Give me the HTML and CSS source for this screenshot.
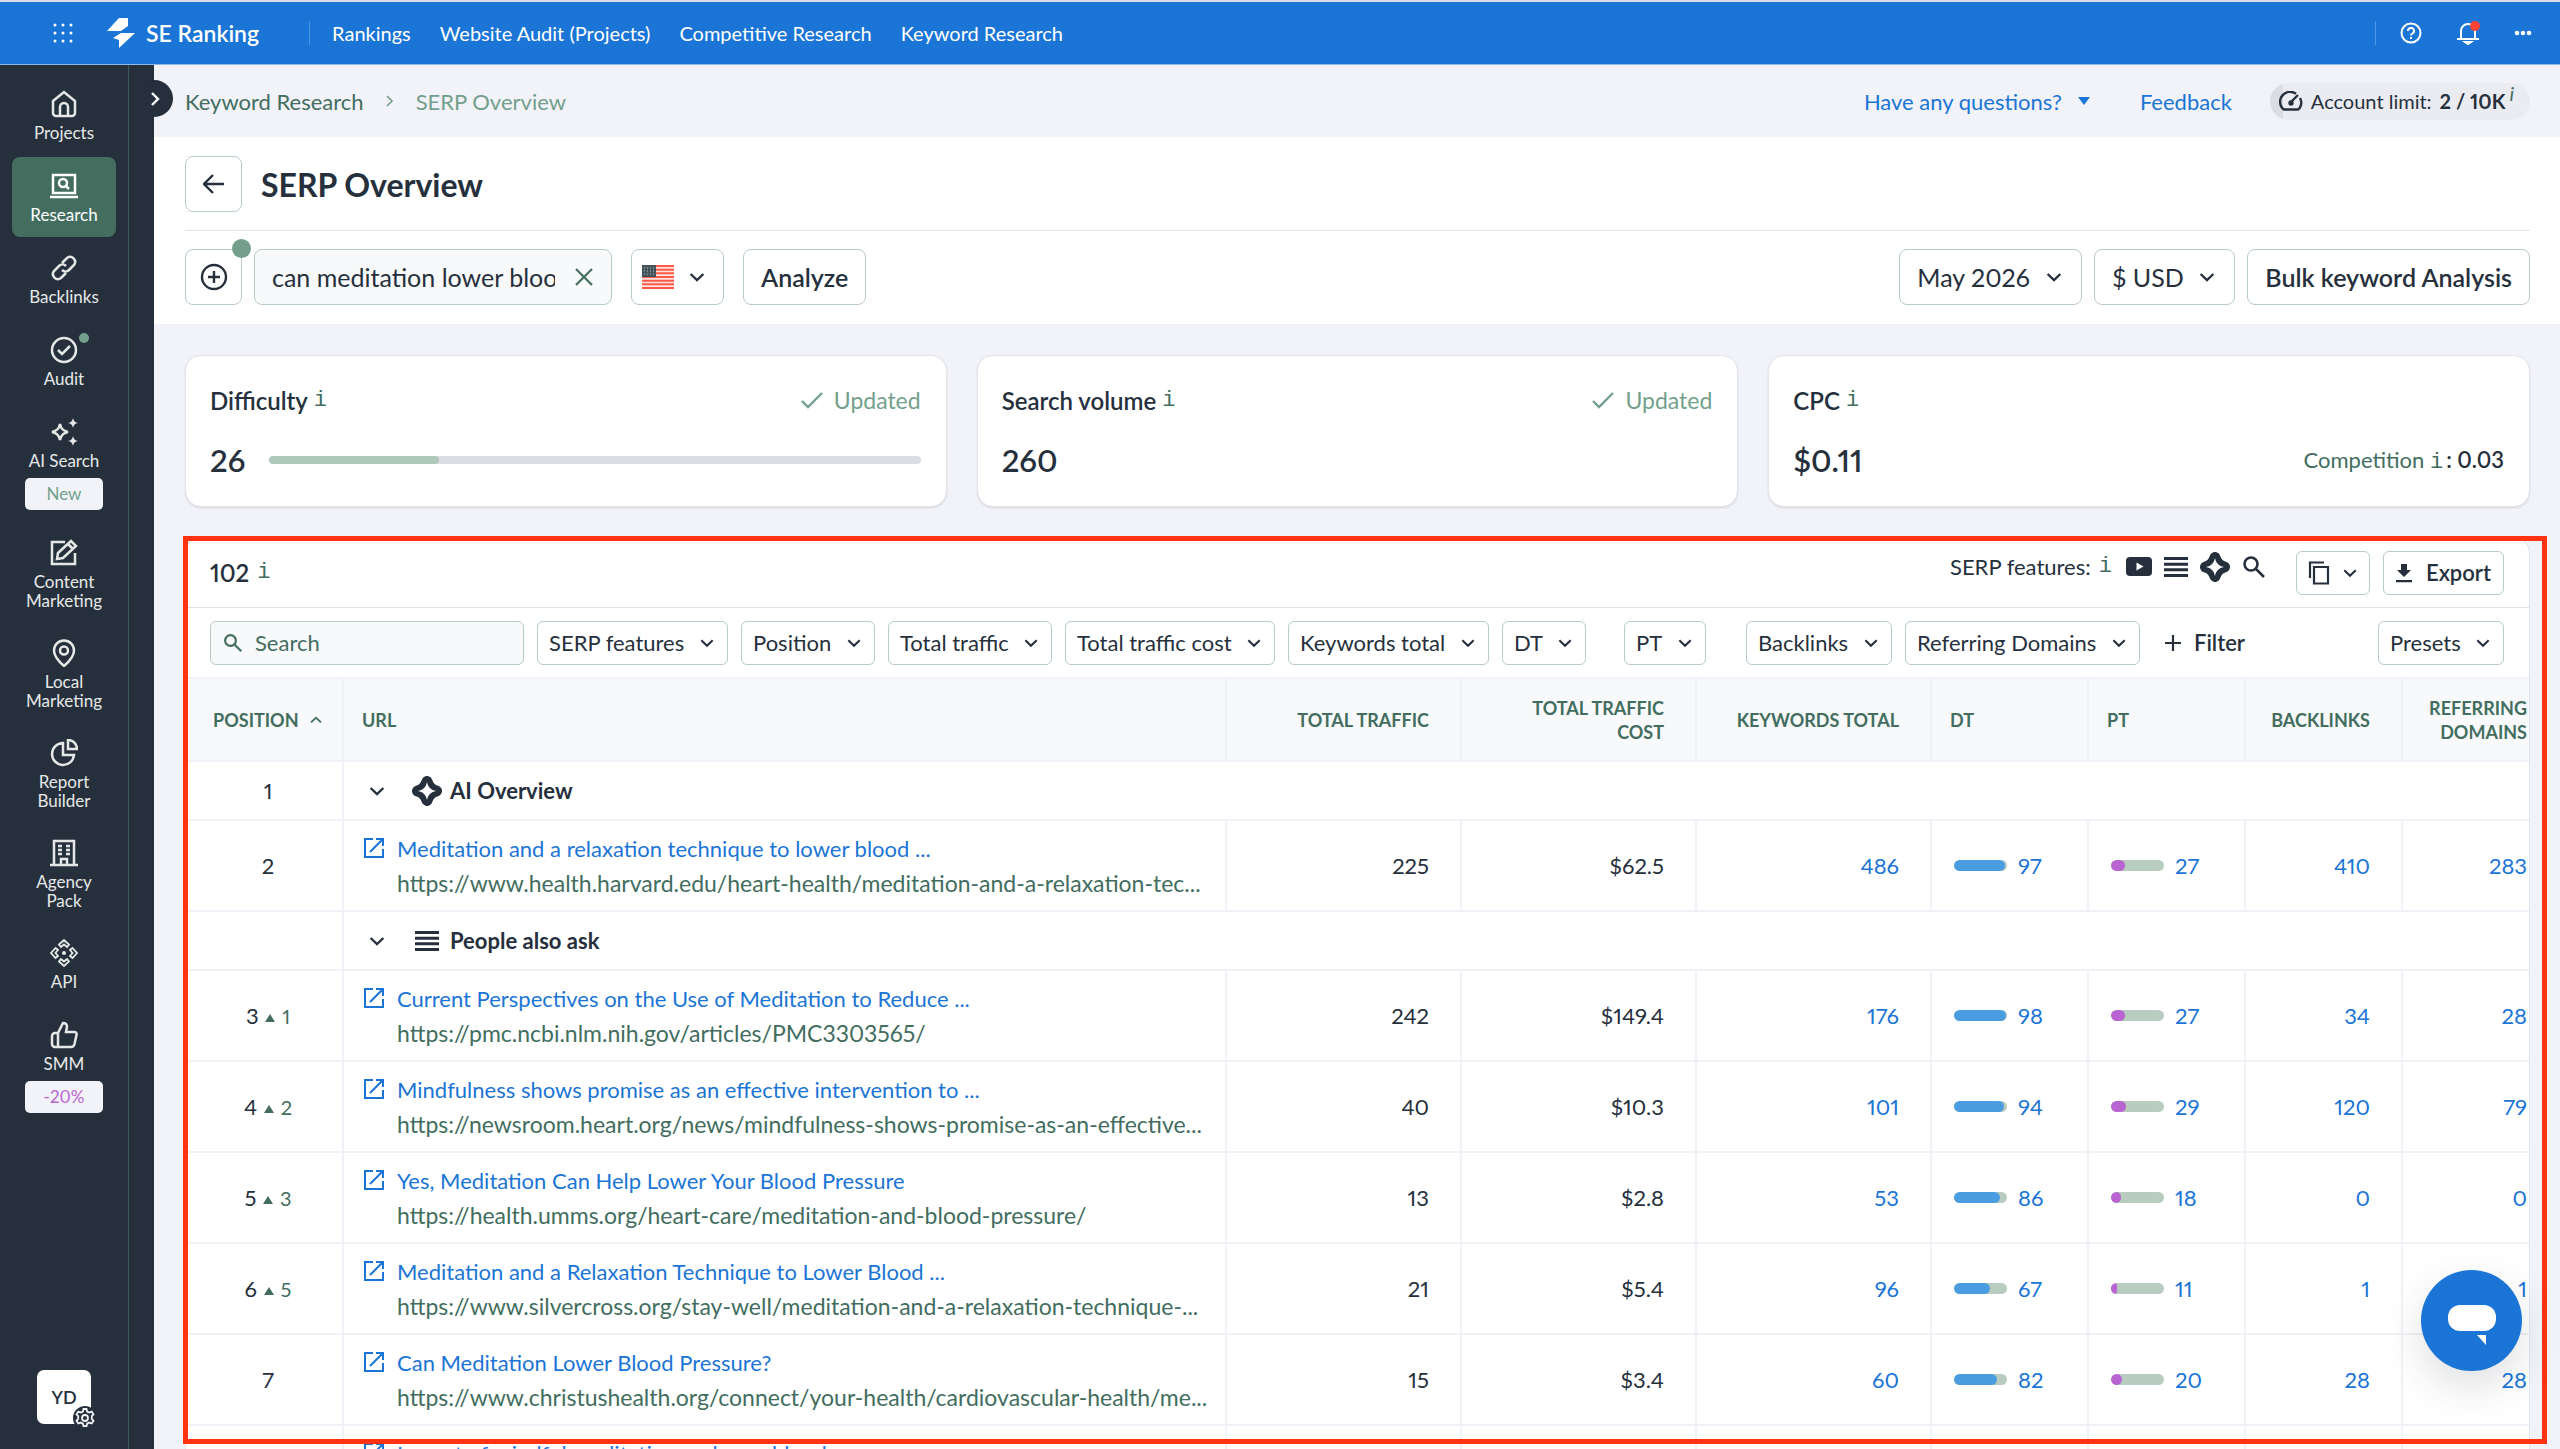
FILE: index.html
```html
<!DOCTYPE html>
<html lang="en">
<head>
	<meta charset="UTF-8">
	<meta name="viewport" content="width=device-width, initial-scale=1.0">
	<title>SERP Overview</title>
	<link rel="stylesheet" href="styles.css">
</head>
<body>
	<!-- shared icons -->
	<svg class="sprite" aria-hidden="true">
		<symbol id="i-chevron" viewBox="0 0 24 24"><path d="M3.500 8l8.500 8 8.500-8" fill="none" stroke="currentColor" stroke-width="3.200"/></symbol>
		<symbol id="i-external" viewBox="0 0 20 20"><path d="M9 1H1v18h18v-8M12 1h7v7M19 1L6 14" fill="none" stroke="currentColor" stroke-width="2"/></symbol>
		<symbol id="i-search" viewBox="0 0 24 24"><path d="M9 2.500a6.500 6.500 0 1 1 0 13 6.500 6.500 0 0 1 0-13zM14 14l8 8" fill="none" stroke="currentColor" stroke-width="2.600"/></symbol>
		<symbol id="i-ai" viewBox="0 0 30 30"><path d="M15 5.500c1.400 4.800 4.700 8.100 9.500 9.500-4.800 1.400-8.100 4.700-9.500 9.500-1.400-4.800-4.700-8.100-9.500-9.500 4.800-1.400 8.100-4.700 9.500-9.500z" fill="currentColor" stroke="currentColor" stroke-width="11" stroke-linejoin="round"/><path d="M15 6c1 5.200 3.800 8 9 9-5.200 1-8 3.800-9 9-1-5.200-3.800-8-9-9 5.200-1 8-3.800 9-9z" fill="#fff"/></symbol>
		<symbol id="i-list" viewBox="0 0 24 20"><path d="M0 1.500h24M0 7.200h24M0 12.800h24M0 18.500h24" stroke="currentColor" stroke-width="3"/></symbol>
		<symbol id="i-check" viewBox="0 0 24 20"><path d="M2 11l6 6L22 3" fill="none" stroke="currentColor" stroke-width="2.400"/></symbol>
	</svg>

	<header class="topnav">
		<button class="icon-btn" aria-label="Apps"><svg width="20" height="20" viewBox="0 0 20 20" fill="currentColor"><circle cx="2" cy="2" r="1.500"/><circle cx="10" cy="2" r="1.500"/><circle cx="18" cy="2" r="1.500"/><circle cx="2" cy="10" r="1.500"/><circle cx="10" cy="10" r="1.500"/><circle cx="18" cy="10" r="1.500"/><circle cx="2" cy="18" r="1.500"/><circle cx="10" cy="18" r="1.500"/><circle cx="18" cy="18" r="1.500"/></svg></button>
		<a href="#" class="brand"><svg width="28" height="30" viewBox="0 0 28 30" fill="currentColor"><path d="M12 0h9v8l-7 5H0z"/><path d="M14 15h14L12 30v-8l-6-2z"/></svg>SE Ranking</a>
		<nav class="topnav-links">
			<a href="#">Rankings</a>
			<a href="#">Website Audit (Projects)</a>
			<a href="#">Competitive Research</a>
			<a href="#">Keyword Research</a>
		</nav>
		<div class="topnav-tools">
			<button class="icon-btn" aria-label="Help"><svg width="22" height="22" viewBox="0 0 22 22" fill="none" stroke="currentColor" stroke-width="2"><circle cx="11" cy="11" r="9.500"/><path d="M8 9a3 3 0 1 1 4.500 2.500c-1 .6-1.500 1-1.500 2M11 15v2"/></svg></button>
			<button class="icon-btn" aria-label="Notifications"><svg width="24" height="24" viewBox="0 0 24 24" fill="none" stroke="currentColor" stroke-width="2"><path d="M5 18V10a7 7 0 0 1 14 0v8M1 18h22"/><path d="M9 21h6l-3 2z" fill="currentColor"/><circle cx="19" cy="5" r="5" fill="#ff4433" stroke="none"/></svg></button>
			<button class="icon-btn" aria-label="More"><svg width="18" height="6" viewBox="0 0 18 6" fill="currentColor"><circle cx="3" cy="3" r="2.300"/><circle cx="9" cy="3" r="2.300"/><circle cx="15" cy="3" r="2.300"/></svg></button>
		</div>
	</header>

	<div class="layout">
		<aside class="sidebar">
			<nav class="side-nav">
				<a href="#" class="side-item"><svg width="28" height="28" viewBox="0 0 28 28"><path d="M3 11L14 2l11 9v12a3 3 0 0 1-3 3H6a3 3 0 0 1-3-3zM10 26v-9a4 4 0 0 1 8 0v9"/></svg>Projects</a>
				<a href="#" class="side-item active"><svg width="28" height="28" viewBox="0 0 28 28"><path d="M3 3h22v18H3zM0 25h28"/><circle cx="13" cy="11" r="4"/><path d="M16 14l3 3"/></svg>Research</a>
				<a href="#" class="side-item"><svg width="28" height="28" viewBox="0 0 28 28"><path d="M12 9l5-5a5 5 0 0 1 7 7l-5 5a5 5 0 0 1-7 0M16 19l-5 5a5 5 0 0 1-7-7l5-5a5 5 0 0 1 7 0"/></svg>Backlinks</a>
				<a href="#" class="side-item"><svg width="28" height="28" viewBox="0 0 28 28"><circle cx="14" cy="14" r="12"/><path d="M8 14l4 4 8-8"/></svg><span class="side-dot"></span>Audit</a>
				<a href="#" class="side-item"><svg width="28" height="28" viewBox="0 0 28 28"><path d="M10 6c1 5 3 7 8 8-5 1-7 3-8 8-1-5-3-7-8-8 5-1 7-3 8-8z"/><path class="solid" d="M23 0c.6 3 2 4.400 5 5-3 .6-4.400 2-5 5-.6-3-2-4.400-5-5 3-.6 4.400-2 5-5zM23 18c.6 3 2 4.400 5 5-3 .6-4.400 2-5 5-.6-3-2-4.400-5-5 3-.6 4.400-2 5-5z"/></svg>AI Search<span class="badge">New</span></a>
				<a href="#" class="side-item"><svg width="28" height="28" viewBox="0 0 28 28"><path d="M15 3H2v22h23V14M7 20l1-6L21 2l5 5-13 12zM18 5l5 5"/></svg>Content<br>Marketing</a>
				<a href="#" class="side-item"><svg width="28" height="28" viewBox="0 0 28 28"><path d="M14 27C7 21 4 17 4 11.500a10 10 0 0 1 20 0C24 17 21 21 14 27z"/><circle cx="14" cy="11.500" r="4"/></svg>Local<br>Marketing</a>
				<a href="#" class="side-item"><svg width="28" height="28" viewBox="0 0 28 28"><path d="M13 4a11 11 0 1 0 11 12H13zM18 1v9h9c0-5-4-9-9-9z"/></svg>Report<br>Builder</a>
				<a href="#" class="side-item"><svg width="28" height="28" viewBox="0 0 28 28"><path d="M4 26V2h20v24M0 26h28M11 26v-6h6v6M8 7h4M16 7h4M8 11h4M16 11h4M8 15h4M16 15h4"/></svg>Agency<br>Pack</a>
				<a href="#" class="side-item"><svg width="28" height="28" viewBox="0 0 28 28"><g stroke-width="1.800"><path d="M9 5.500L14 1l5 4.500-2 2.500-3-2.500L11 8z"/><path d="M9 22.500l5 4.500 5-4.500-2-2.500-3 2.500-3-2.500z"/><path d="M5.500 9L1 14l4.500 5L8 17l-2.500-3L8 11z"/><path d="M22.500 9l4.500 5-4.500 5-2.500-2 2.500-3-2.500-3z"/></g><circle class="solid" cx="14" cy="14" r="2"/></svg>API</a>
				<a href="#" class="side-item"><svg width="28" height="28" viewBox="0 0 28 28"><path d="M8 12l5-10c3 0 4 2 4 4l-1 5h8c2 0 3 1 2.500 3l-2 9c-.5 2-1.500 3-3.500 3H8zM8 12H5a3 3 0 0 0-3 3v8a3 3 0 0 0 3 3h3z"/></svg>SMM<span class="badge badge-sale">-20%</span></a>
			</nav>
			<button class="avatar">YD<svg class="gear" width="24" height="24" viewBox="0 0 24 24"><circle cx="12" cy="12" r="12" fill="#26303d"/><path d="M10.500 3h3l.6 2.500 2.200 1 2.400-1 1.800 2.800-1.700 1.800v2.800l1.700 1.900-1.800 2.700-2.400-.9-2.200 1.100-.6 2.500h-3l-.6-2.500-2.200-1.100-2.400.9-1.800-2.700 1.700-1.900v-2.800L3.500 8.300l1.800-2.800 2.400 1 2.200-1z" fill="none" stroke="#f2f3f7" stroke-width="1.800"/><circle cx="12" cy="12" r="3" fill="none" stroke="#f2f3f7" stroke-width="1.800"/></svg></button>
		</aside>
		<button class="expand" aria-label="Expand menu"><svg width="12" height="14" viewBox="0 0 12 14"><path d="M3 1l6 6-6 6" fill="none" stroke="currentColor" stroke-width="2.400"/></svg></button>

		<main class="main">
			<div class="crumbbar">
				<nav class="crumbs">
					<a href="#">Keyword Research</a>
					<svg width="8" height="12" viewBox="0 0 8 12"><path d="M1 1l5 5-5 5" fill="none" stroke="currentColor" stroke-width="1.600"/></svg>
					<span>SERP Overview</span>
				</nav>
				<div class="crumb-tools">
					<a href="#">Have any questions? <svg width="12" height="8" viewBox="0 0 12 8" fill="currentColor"><path d="M0 0h12L6 8z"/></svg></a>
					<a href="#">Feedback</a>
					<div class="limit"><svg width="24" height="20" viewBox="0 0 24 20" fill="none" stroke="currentColor" stroke-width="2.400"><path d="M17 2.800A10 10 0 0 0 3.600 17.500L5 18.500h14l1.400-1A10 10 0 0 0 21 7M11 12l8-8"/><circle cx="12" cy="12" r="1.500" fill="currentColor"/></svg><span>Account limit:</span><b>2 / 10K</b><i>i</i></div>
				</div>
			</div>

			<section class="page-head">
				<div class="title-row">
					<button class="btn btn-square" aria-label="Back"><svg width="22" height="20" viewBox="0 0 22 20"><path d="M21 10H2M10 1l-9 9 9 9" fill="none" stroke="currentColor" stroke-width="2.400"/></svg></button>
					<h1>SERP Overview</h1>
				</div>
				<form class="query-row">
					<button type="button" class="btn btn-square" aria-label="Add"><svg width="28" height="28" viewBox="0 0 28 28" fill="none" stroke="currentColor" stroke-width="2.400"><circle cx="14" cy="14" r="12"/><path d="M14 8v12M8 14h12"/></svg><span class="hint-dot"></span></button>
					<div class="query">
						<input type="text" aria-label="Keyword" value="can meditation lower blood pressure">
						<button type="button" class="clear" aria-label="Clear"><svg width="18" height="18" viewBox="0 0 18 18"><path d="M1 1l16 16M17 1L1 17" fill="none" stroke="currentColor" stroke-width="2.200"/></svg></button>
					</div>
					<button type="button" class="btn btn-flag" aria-label="United States">
						<svg width="32" height="24" viewBox="0 0 32 24"><rect width="32" height="24" rx="2" fill="#ffe3df"/><path d="M0 1h32M0 4.700h32M0 8.300h32M0 12h32M0 15.700h32M0 19.300h32M0 23h32" stroke="#ff5a47" stroke-width="1.900"/><rect width="14" height="12" fill="#44545c"/><path d="M2 3h11M2 6h11M2 9h11" stroke="#b5c4c4" stroke-dasharray="1 2"/></svg>
						<svg width="18" height="18"><use href="#i-chevron"/></svg>
					</button>
					<button type="button" class="btn btn-strong">Analyze</button>
					<span class="spacer"></span>
					<select class="select select-lg" aria-label="Month"><option>May 2026</option></select>
					<select class="select select-lg" aria-label="Currency"><option>$ USD</option></select>
					<button type="button" class="btn btn-strong">Bulk keyword Analysis</button>
				</form>
			</section>

			<section class="cards">
				<article class="card">
					<div class="card-row"><h2>Difficulty</h2><span class="info">i</span><span class="updated"><svg width="24" height="20"><use href="#i-check"/></svg>Updated</span></div>
					<div class="card-row"><strong>26</strong><div class="meter"><div class="meter-fill" style="width:26%"></div></div></div>
				</article>
				<article class="card">
					<div class="card-row"><h2>Search volume</h2><span class="info">i</span><span class="updated"><svg width="24" height="20"><use href="#i-check"/></svg>Updated</span></div>
					<div class="card-row"><strong>260</strong></div>
				</article>
				<article class="card">
					<div class="card-row"><h2>CPC</h2><span class="info">i</span></div>
					<div class="card-row"><strong>$0.11</strong><span class="competition">Competition <span class="info">i</span><b>: 0.03</b></span></div>
				</article>
			</section>

			<section class="results-wrap">
				<div class="results">
					<div class="toolbar">
						<b class="count">102</b><span class="info">i</span>
						<div class="features">
							<span>SERP features:</span><span class="info">i</span>
							<svg width="26" height="19" viewBox="0 0 26 19"><rect width="26" height="19" rx="4" fill="currentColor"/><path d="M10.500 5.500v8l7-4z" fill="#fff"/></svg>
							<svg width="24" height="20"><use href="#i-list"/></svg>
							<svg width="30" height="30"><use href="#i-ai"/></svg>
							<svg width="24" height="24"><use href="#i-search"/></svg>
						</div>
						<button class="btn btn-sm" aria-label="Copy"><svg width="22" height="24" viewBox="0 0 22 24" fill="none" stroke="currentColor" stroke-width="2.200"><path d="M16 1.500H2V17M6 6h14v16.500H6z"/></svg><svg width="16" height="16"><use href="#i-chevron"/></svg></button>
						<button class="btn btn-sm btn-strong"><svg width="16" height="20" viewBox="0 0 16 20" fill="currentColor"><path d="M5 1h6v6h4l-7 7-7-7h4zM0 17h16v2.200H0z"/></svg>Export</button>
					</div>
					<form class="filters">
						<label class="search"><svg width="20" height="20"><use href="#i-search"/></svg><input type="search" placeholder="Search" aria-label="Search"></label>
						<select class="select" aria-label="SERP features"><option>SERP features</option></select>
						<select class="select" aria-label="Position"><option>Position</option></select>
						<select class="select" aria-label="Total traffic"><option>Total traffic</option></select>
						<select class="select" aria-label="Total traffic cost"><option>Total traffic cost</option></select>
						<select class="select" aria-label="Keywords total"><option>Keywords total</option></select>
						<div class="slot"><select class="select" aria-label="DT"><option>DT</option></select></div>
						<div class="slot"><select class="select" aria-label="PT"><option>PT</option></select></div>
						<select class="select" aria-label="Backlinks"><option>Backlinks</option></select>
						<select class="select" aria-label="Referring Domains"><option>Referring Domains</option></select>
						<button type="button" class="add-filter"><svg width="16" height="16" viewBox="0 0 16 16"><path d="M8 0v16M0 8h16" stroke="currentColor" stroke-width="2.200"/></svg>Filter</button>
						<span class="spacer"></span>
						<select class="select" aria-label="Presets"><option>Presets</option></select>
					</form>
					<table class="serp">
						<colgroup><col class="c-pos"><col><col class="c-wide"><col class="c-wide"><col class="c-wide"><col class="c-narrow"><col class="c-narrow"><col class="c-narrow"><col class="c-narrow"></colgroup>
						<thead>
							<tr><th class="pos">Position <svg class="sort" width="14" height="14"><use href="#i-chevron"/></svg></th><th class="left">URL</th><th>Total traffic</th><th>Total traffic<br>cost</th><th>Keywords total</th><th class="left">DT</th><th class="left">PT</th><th>Backlinks</th><th>Referring domains</th></tr>
						</thead>
						<tbody>
							<tr class="group"><td class="pos">1</td><td colspan="8"><div class="group-name"><svg class="fold" width="18" height="18"><use href="#i-chevron"/></svg><svg width="30" height="30"><use href="#i-ai"/></svg>AI Overview</div></td></tr>
							<tr>
								<td class="pos">2</td>
								<td class="page"><div><svg width="20" height="20"><use href="#i-external"/></svg><p><a href="#">Meditation and a relaxation technique to lower blood ...</a><span>https://www.health.harvard.edu/heart-health/meditation-and-a-relaxation-tec...</span></p></div></td>
								<td>225</td><td>$62.5</td><td><a href="#">486</a></td>
								<td class="rate"><div><span class="bar"><span class="fill" style="width:97%"></span></span><a href="#">97</a></div></td>
								<td class="rate"><div><span class="bar"><span class="fill fill-pt" style="width:27%"></span></span><a href="#">27</a></div></td>
								<td><a href="#">410</a></td><td><a href="#">283</a></td>
							</tr>
							<tr class="group"><td class="pos"></td><td colspan="8"><div class="group-name"><svg class="fold" width="18" height="18"><use href="#i-chevron"/></svg><svg width="30" height="20"><use href="#i-list"/></svg>People also ask</div></td></tr>
							<tr>
								<td class="pos">3 <span class="up">1</span></td>
								<td class="page"><div><svg width="20" height="20"><use href="#i-external"/></svg><p><a href="#">Current Perspectives on the Use of Meditation to Reduce ...</a><span>https://pmc.ncbi.nlm.nih.gov/articles/PMC3303565/</span></p></div></td>
								<td>242</td><td>$149.4</td><td><a href="#">176</a></td>
								<td class="rate"><div><span class="bar"><span class="fill" style="width:98%"></span></span><a href="#">98</a></div></td>
								<td class="rate"><div><span class="bar"><span class="fill fill-pt" style="width:27%"></span></span><a href="#">27</a></div></td>
								<td><a href="#">34</a></td><td><a href="#">28</a></td>
							</tr>
							<tr>
								<td class="pos">4 <span class="up">2</span></td>
								<td class="page"><div><svg width="20" height="20"><use href="#i-external"/></svg><p><a href="#">Mindfulness shows promise as an effective intervention to ...</a><span>https://newsroom.heart.org/news/mindfulness-shows-promise-as-an-effective...</span></p></div></td>
								<td>40</td><td>$10.3</td><td><a href="#">101</a></td>
								<td class="rate"><div><span class="bar"><span class="fill" style="width:94%"></span></span><a href="#">94</a></div></td>
								<td class="rate"><div><span class="bar"><span class="fill fill-pt" style="width:29%"></span></span><a href="#">29</a></div></td>
								<td><a href="#">120</a></td><td><a href="#">79</a></td>
							</tr>
							<tr>
								<td class="pos">5 <span class="up">3</span></td>
								<td class="page"><div><svg width="20" height="20"><use href="#i-external"/></svg><p><a href="#">Yes, Meditation Can Help Lower Your Blood Pressure</a><span>https://health.umms.org/heart-care/meditation-and-blood-pressure/</span></p></div></td>
								<td>13</td><td>$2.8</td><td><a href="#">53</a></td>
								<td class="rate"><div><span class="bar"><span class="fill" style="width:86%"></span></span><a href="#">86</a></div></td>
								<td class="rate"><div><span class="bar"><span class="fill fill-pt" style="width:18%"></span></span><a href="#">18</a></div></td>
								<td><a href="#">0</a></td><td><a href="#">0</a></td>
							</tr>
							<tr>
								<td class="pos">6 <span class="up">5</span></td>
								<td class="page"><div><svg width="20" height="20"><use href="#i-external"/></svg><p><a href="#">Meditation and a Relaxation Technique to Lower Blood ...</a><span>https://www.silvercross.org/stay-well/meditation-and-a-relaxation-technique-...</span></p></div></td>
								<td>21</td><td>$5.4</td><td><a href="#">96</a></td>
								<td class="rate"><div><span class="bar"><span class="fill" style="width:67%"></span></span><a href="#">67</a></div></td>
								<td class="rate"><div><span class="bar"><span class="fill fill-pt" style="width:11%"></span></span><a href="#">11</a></div></td>
								<td><a href="#">1</a></td><td><a href="#">1</a></td>
							</tr>
							<tr>
								<td class="pos">7</td>
								<td class="page"><div><svg width="20" height="20"><use href="#i-external"/></svg><p><a href="#">Can Meditation Lower Blood Pressure?</a><span>https://www.christushealth.org/connect/your-health/cardiovascular-health/me...</span></p></div></td>
								<td>15</td><td>$3.4</td><td><a href="#">60</a></td>
								<td class="rate"><div><span class="bar"><span class="fill" style="width:82%"></span></span><a href="#">82</a></div></td>
								<td class="rate"><div><span class="bar"><span class="fill fill-pt" style="width:20%"></span></span><a href="#">20</a></div></td>
								<td><a href="#">28</a></td><td><a href="#">28</a></td>
							</tr>
							<tr>
								<td class="pos"></td>
								<td class="page"><div><svg width="20" height="20"><use href="#i-external"/></svg><p><a href="#">Impact of mindful meditation on lower blood ...</a><span></span></p></div></td>
								<td></td><td></td><td></td><td></td><td></td><td></td><td></td>
							</tr>
						</tbody>
					</table>
				</div>
				<div class="outline"></div>
			</section>
		</main>
	</div>

	<button class="chat" aria-label="Chat"><svg width="48" height="40" viewBox="0 0 48 40" fill="#fff"><rect width="48" height="26" rx="12"/><path d="M29 30h9v10z"/></svg></button>
</body>
</html>
```
FILE: styles.css
```css
* {
	box-sizing: border-box;
}

body {
	margin: 0;
	height: 100vh;
	display: flex;
	flex-direction: column;
	overflow: hidden;
	background: #f2f3f8;
	border-top: 2px solid #dadde8;
	color: #26303d;
	font-family: Lato, "Noto Sans", sans-serif;
	font-size: 22px;
	font-variant-numeric: proportional-nums;
}

a {
	color: #1b75d6;
	text-decoration: none;
}

button, input, select {
	font: inherit;
	color: inherit;
}

button {
	cursor: pointer;
}

svg {
	display: block;
	flex: none;
}

.sprite {
	position: absolute;
	width: 0;
	height: 0;
}

.spacer {
	flex: 1;
}

.info {
	font-family: "Liberation Mono", monospace;
	color: #426d5f;
}

/* top bar */
.topnav {
	display: flex;
	align-items: center;
	height: 63px;
	padding: 0 28px 0 53px;
	background: #1b75d6;
	border-bottom: 1px solid #8fb9ea;
	color: #fff;
	font-size: 20px;
}

.topnav a {
	color: #fff;
}

.icon-btn {
	display: flex;
	padding: 0;
	border: 0;
	background: none;
}

.brand {
	display: flex;
	align-items: center;
	gap: 11px;
	margin-left: 34px;
	font-size: 23px;
	font-weight: 600;
}

.topnav-links {
	display: flex;
	gap: 29px;
	margin-left: 50px;
	padding-left: 22px;
	border-left: 1px solid #4f97e2;
}

.topnav-tools {
	display: flex;
	align-items: center;
	gap: 34px;
	margin-left: auto;
	padding-left: 24px;
	border-left: 1px solid #4f97e2;
}

/* left menu */
.layout {
	position: relative;
	display: flex;
	flex: 1;
	min-height: 0;
}

.sidebar {
	display: flex;
	flex-direction: column;
	width: 154px;
	padding: 10px 25px 25px 0;
	background: linear-gradient(#3b5a55, #3b5a55) 128px 0 / 1px 100% no-repeat #26303d;
}

.side-nav {
	display: flex;
	flex-direction: column;
	gap: 2px;
	padding: 0 13px 0 12px;
}

.side-item {
	position: relative;
	display: flex;
	flex-direction: column;
	align-items: center;
	min-height: 80px;
	padding: 15px 0 12px;
	border-radius: 8px;
	color: #e6e8e8;
	font-size: 17px;
	line-height: 19px;
	text-align: center;
}

.side-item svg {
	margin-bottom: 5px;
	fill: none;
	stroke: currentColor;
	stroke-width: 2.5;
}

.side-item .solid {
	fill: currentColor;
	stroke: none;
}

.side-item.active {
	background: #426d5f;
	color: #fff;
}

.side-dot {
	position: absolute;
	top: 12px;
	left: 67px;
	width: 10px;
	height: 10px;
	border-radius: 50%;
	background: #739f8c;
}

.badge {
	width: 78px;
	margin-top: 8px;
	border-radius: 5px;
	background: #f2f3f8;
	color: #739f8c;
	line-height: 32px;
}

.badge-sale {
	color: #ba63d3;
}

.avatar {
	position: relative;
	width: 54px;
	height: 54px;
	margin: auto 0 0 37px;
	border: 0;
	border-radius: 7px;
	background: #fff;
	font-size: 18px;
	font-weight: 600;
}

.gear {
	position: absolute;
	right: -6px;
	bottom: -6px;
}

.expand {
	position: absolute;
	top: 15px;
	left: 136px;
	display: flex;
	align-items: center;
	justify-content: center;
	width: 37px;
	height: 37px;
	padding: 0;
	border: 0;
	border-radius: 50%;
	background: #26303d;
	color: #fff;
}

/* page */
.main {
	display: flex;
	flex: 1;
	flex-direction: column;
	min-width: 0;
}

.crumbbar {
	display: flex;
	align-items: center;
	justify-content: space-between;
	height: 72px;
	padding: 0 30px 0 31px;
}

.crumbs, .crumb-tools {
	display: flex;
	align-items: center;
}

.crumbs {
	gap: 22px;
	color: #739f8c;
}

.crumbs a {
	color: #426d5f;
}

.crumb-tools {
	gap: 38px;
}

.crumb-tools a {
	display: flex;
	align-items: center;
	gap: 16px;
}

.crumb-tools a:first-child {
	margin-right: 12px;
}

.limit {
	display: flex;
	align-items: center;
	gap: 8px;
	height: 37px;
	padding: 0 16px 0 9px;
	border-radius: 19px;
	background: linear-gradient(to right, #dcdce3 13px, #ebecf1 13px);
	font-size: 20px;
}

.limit i {
	margin: -16px 0 0 -4px;
	color: #426d5f;
}

.page-head {
	padding: 19px 30px 19px 31px;
	background: #fff;
}

.title-row {
	display: flex;
	align-items: center;
	gap: 19px;
	padding-bottom: 18px;
	border-bottom: 1px solid #dfe3e8;
}

h1 {
	margin: 0;
	font-size: 32px;
	font-weight: 700;
}

.query-row {
	display: flex;
	align-items: center;
	gap: 12px;
	padding-top: 18px;
}

.btn {
	position: relative;
	display: flex;
	align-items: center;
	justify-content: center;
	height: 56px;
	padding: 0 17px;
	border: 1px solid #b7cdc2;
	border-radius: 8px;
	background: #fff;
	font-size: 25px;
}

.btn-square {
	width: 57px;
	padding: 0;
}

.btn-strong {
	font-weight: 600;
}

.btn-flag {
	gap: 14px;
	margin: 0 7px;
	padding: 0 17px 0 10px;
}

.hint-dot {
	position: absolute;
	top: -11px;
	right: -10px;
	width: 19px;
	height: 19px;
	border-radius: 50%;
	background: #739f8c;
}

.query {
	display: flex;
	align-items: center;
	width: 358px;
	height: 56px;
	padding: 0 18px 0 17px;
	border: 1px solid #b7cdc2;
	border-radius: 8px;
	background: #f8f9fb;
	font-size: 25px;
}

.query input {
	flex: 1;
	width: 0;
	margin-right: 20px;
	padding: 0;
	border: 0;
	background: none;
}

.clear {
	padding: 0;
	border: 0;
	background: none;
	color: #426d5f;
}

.select {
	height: 44px;
	padding: 0 42px 0 11px;
	border: 1px solid #b7cdc2;
	border-radius: 6px;
	appearance: none;
	background: #fff url("data:image/svg+xml,%3Csvg xmlns='http://www.w3.org/2000/svg' width='16' height='16' viewBox='0 0 24 24'%3E%3Cpath d='M3.500 8l8.500 8 8.500-8' fill='none' stroke='%2326303d' stroke-width='3.200'/%3E%3C/svg%3E") no-repeat right 12px center;
}

.select-lg {
	height: 56px;
	padding: 0 50px 0 17px;
	border-radius: 8px;
	background-position: right 18px center;
	background-size: 18px;
	font-size: 25px;
}

/* metric cards */
.cards {
	display: grid;
	grid-template-columns: repeat(3, 1fr);
	gap: 30px;
	padding: 31px 30px 30px 31px;
}

.card {
	display: flex;
	flex-direction: column;
	gap: 30px;
	height: 152px;
	padding: 29px 25px 29px 24px;
	border: 1px solid #e4e5eb;
	border-radius: 16px;
	background: #fff;
	box-shadow: 0 1px 2px #d5d6dc;
}

.card-row {
	display: flex;
	align-items: center;
	gap: 6px;
	height: 30px;
}

.card h2 {
	margin: 0;
	font-size: 24px;
	font-weight: 600;
}

.card strong {
	font-size: 31px;
	font-weight: 600;
}

.updated {
	display: flex;
	align-items: center;
	gap: 10px;
	margin-left: auto;
	color: #739f8c;
	font-size: 23px;
}

.meter {
	flex: 1;
	height: 8px;
	margin-left: 18px;
	border-radius: 4px;
	background: #dcdce3;
	overflow: hidden;
}

.meter-fill {
	height: 100%;
	border-radius: 4px;
	background: #aec8b9;
}

.competition {
	margin-left: auto;
	color: #426d5f;
}

.competition b {
	margin-left: 3px;
	color: #26303d;
	font-weight: 600;
}

/* results */
.results-wrap {
	position: relative;
	flex: 1;
	min-height: 0;
	padding: 0 30px 0 31px;
}

.results {
	height: 100%;
	border: 1px solid #e4e5eb;
	border-bottom: 0;
	border-radius: 16px 16px 0 0;
	background: #fff;
	overflow: hidden;
}

.outline {
	position: absolute;
	top: -1px;
	right: 13px;
	bottom: 5px;
	left: 29px;
	border: 5px solid #ff3311;
	pointer-events: none;
}

.toolbar {
	display: flex;
	align-items: center;
	gap: 8px;
	height: 70px;
	padding: 0 25px 0 24px;
	border-bottom: 1px solid #dfe3e8;
}

.count {
	font-size: 24px;
	font-weight: 600;
}

.features {
	display: flex;
	align-items: center;
	gap: 12px;
	margin: 0 22px 12px auto;
}

.features .info {
	margin: 0 2px 0 -4px;
}

.btn-sm {
	gap: 12px;
	height: 44px;
	margin-right: 5px;
	padding: 0 11px;
	border-radius: 6px;
	font-size: 22px;
}

.btn-sm:last-child {
	gap: 14px;
	margin-right: 0;
	padding: 0 12px;
}

.filters {
	display: flex;
	align-items: center;
	gap: 13px;
	height: 69px;
	padding: 0 25px 0 24px;
}

.search {
	display: flex;
	align-items: center;
	gap: 12px;
	width: 314px;
	height: 44px;
	padding: 0 12px;
	border: 1px solid #b7cdc2;
	border-radius: 6px;
	background: #f8f9fb;
	color: #426d5f;
}

.search input {
	flex: 1;
	width: 0;
	padding: 0;
	border: 0;
	background: none;
}

.search input::placeholder {
	color: #426d5f;
}

.slot {
	width: 109px;
}

.add-filter {
	display: flex;
	align-items: center;
	gap: 13px;
	padding: 0 12px;
	border: 0;
	background: none;
	font-weight: 600;
}

/* last column runs past the card edge */
.serp {
	width: calc(100% + 31px);
	table-layout: fixed;
	border-collapse: separate;
	border-spacing: 0;
}

.c-pos {
	width: 158px;
}

.c-wide {
	width: 235px;
}

.c-narrow {
	width: 157px;
}

.serp th, .serp td {
	padding: 0 31px 0 18px;
	border-right: 2px solid #f1f2f7;
	border-bottom: 2px solid #f1f2f7;
	text-align: right;
}

.serp th {
	height: 85px;
	border-top: 2px solid #f1f2f7;
	background: #f8f9fb;
	color: #426d5f;
	font-size: 18px;
	font-weight: 700;
	line-height: 24px;
	text-transform: uppercase;
}

.serp .left {
	text-align: left;
}

.serp td {
	height: 91px;
}

.serp .group td {
	height: 59px;
}

.serp .pos {
	padding: 0 0 0 8px;
	text-align: center;
}

.sort {
	display: inline-block;
	margin-left: 6px;
	transform: rotate(180deg);
}

.group-name {
	display: flex;
	align-items: center;
	gap: 8px;
	padding-left: 6px;
	font-weight: 700;
}

.fold {
	margin-right: 18px;
}

.serp .page {
	padding: 0 16px 0 20px;
	text-align: left;
}

.page div {
	display: flex;
	gap: 13px;
}

.page svg {
	margin-top: 7px;
	color: #1b75d6;
}

.page p {
	min-width: 0;
	margin: 0;
	color: #426d5f;
	line-height: 35px;
}

.page p a, .page p span {
	display: block;
	height: 35px;
	overflow: hidden;
	text-overflow: ellipsis;
	white-space: nowrap;
}

.page p span {
	font-size: 23px;
}

.up {
	color: #426d5f;
	font-size: 20px;
}

.up::before {
	content: "";
	display: inline-block;
	margin: 0 7px 2px 1px;
	border: 5px solid transparent;
	border-top: 0;
	border-bottom: 8px solid #426d5f;
}

.serp .rate {
	padding: 0 0 0 22px;
}

.rate div {
	display: flex;
	align-items: center;
	gap: 11px;
}

.bar {
	width: 53px;
	height: 11px;
	border-radius: 6px;
	background: #b9ccc0;
	overflow: hidden;
}

.fill {
	display: block;
	height: 100%;
	border-radius: 6px;
	background: #4b9de2;
}

.fill-pt {
	background: #ba63d3;
}

.chat {
	position: fixed;
	right: 38px;
	bottom: 78px;
	display: flex;
	align-items: center;
	justify-content: center;
	width: 101px;
	height: 101px;
	padding: 8px 0 0;
	border: 0;
	border-radius: 50%;
	background: #1b75d6;
	box-shadow: 0 16px 40px rgba(38, 48, 61, 0.15);
}
```
